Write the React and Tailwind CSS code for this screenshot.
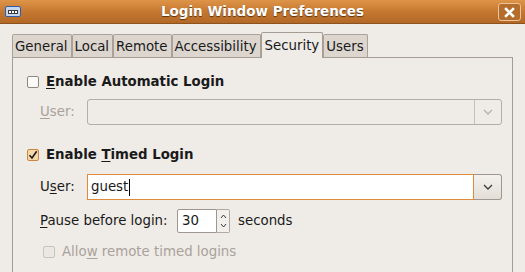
import React from 'react'

const font = { fontFamily: '"DejaVu Sans", "Liberation Sans", sans-serif' }

const Check = ({ checked, disabled }) => (
  <span
    className={`flex h-[12px] w-[12px] shrink-0 items-center justify-center rounded-[2px] border ${
      checked
        ? 'border-[#c9873f] bg-[#f6d7a8]'
        : disabled
        ? 'border-[#c9c3bc] bg-[#ebe7e2]'
        : 'border-[#8f8881] bg-[#fbfaf9]'
    }`}
  >
    {checked && (
      <svg width="10" height="10" viewBox="0 0 10 10">
        <path d="M1.5 5.2 L4 8 L8.7 1.3" fill="none" stroke="#1a1a1a" strokeWidth="1.6" />
      </svg>
    )}
  </span>
)

const Chevron = ({ color }) => (
  <svg width="10" height="6" viewBox="0 0 10 6">
    <path d="M1 1 L5 5 L9 1" fill="none" stroke={color} strokeWidth="1.3" />
  </svg>
)

const Tab = ({ label, active }) => (
  <div
    className={
      active
        ? 'relative z-10 -mb-px flex h-[26px] items-start whitespace-nowrap rounded-t-[2px] border-x border-t border-[#a59d95] bg-[#efebe7] pl-[3px] pr-[3px] pt-[3px]'
        : 'flex h-[23px] items-start whitespace-nowrap rounded-t-[2px] border-x border-t border-[#aaa29a] bg-[#dcd6cf] pl-[2px] pr-[3px] pt-[2px]'
    }
  >
    {label}
  </div>
)

export default function App() {
  const tabs = ['General', 'Local', 'Remote', 'Accessibility', 'Security', 'Users']
  return (
    <div className="h-[272px] w-[525px] overflow-hidden bg-[#efebe7] text-[13.33px] text-[#1a1a1a]" style={font}>
      {/* title bar */}
      <div className="relative flex h-[24px] items-center justify-center border-b border-[#8e521d] bg-linear-to-b from-[#de9548] via-[#c67830] to-[#b26827]">
        <div className="absolute left-[5px] top-[6px] flex h-[11px] w-[16px] items-center justify-center rounded-[2px] border border-[#2f5ea8] bg-[#c5d6ee]">
          <div className="flex h-[4px] w-[10px] items-center justify-center gap-[1px] bg-[#3a3a3a]">
            <span className="h-[2px] w-[2px] bg-white" />
            <span className="h-[2px] w-[2px] bg-white" />
            <span className="h-[2px] w-[2px] bg-white" />
          </div>
        </div>
        <span className="text-[13.5px] font-bold text-white [text-shadow:0_1px_1px_#5a3410]">Login Window Preferences</span>
        <div className="absolute right-[4px] top-[3px] flex h-[18px] w-[23px] items-center justify-center rounded-[3px] border border-[#eac49a] bg-[#b56d2c]">
          <svg width="11" height="11" viewBox="0 0 11 11">
            <path d="M2 2 L9 9 M9 2 L2 9" stroke="white" strokeWidth="2.6" strokeLinecap="square" />
          </svg>
        </div>
      </div>

      <div className="px-[12px] pt-[8px]">
        {/* tabs */}
        <div className="flex h-[25px] items-end">
          {tabs.map(t => (
            <Tab key={t} label={t} active={t === 'Security'} />
          ))}
        </div>

        {/* panel */}
        <div className="h-[240px] border border-[#a59d95] pl-[14px] pr-[10px] pt-[14px]">
          <div className="flex h-[20px] items-center gap-[7px]">
            <Check />
            <span className="font-bold">
              <span className="underline underline-offset-2">E</span>nable Automatic Login
            </span>
          </div>

          <div className="mt-[7px] flex h-[26px] items-center pl-[13px]">
            <span className="w-[47px] shrink-0 text-[#a9a29b]">
              <span className="underline underline-offset-2">U</span>ser:
            </span>
            <div className="flex h-[26px] flex-1 rounded-[3px] border border-[#b6aea6] bg-[#efebe7]">
              <div className="flex-1" />
              <div className="flex w-[27px] items-center justify-center border-l border-[#c6bfb8]">
                <Chevron color="#b9b1a9" />
              </div>
            </div>
          </div>

          <div className="mt-[20px] flex h-[20px] items-center gap-[7px]">
            <Check checked />
            <span className="font-bold">
              Enable <span className="underline underline-offset-2">T</span>imed Login
            </span>
          </div>

          <div className="mt-[9px] flex h-[26px] items-center pl-[13px]">
            <span className="w-[47px] shrink-0">
              U<span className="underline underline-offset-2">s</span>er:
            </span>
            <div className="flex h-[26px] flex-1">
              <div className="flex flex-1 items-center border border-[#dd8a3a] bg-white pl-[3px]">
                guest<span className="ml-px h-[17px] w-px bg-black" />
              </div>
              <div className="flex w-[28px] items-center justify-center rounded-r-[3px] border border-l-0 border-[#9f978f] bg-linear-to-b from-[#f4f1ee] to-[#e4ded8]">
                <Chevron color="#3a3a3a" />
              </div>
            </div>
          </div>

          <div className="mt-[9px] flex h-[24px] items-center pl-[13px]">
            <span className="w-[137px] shrink-0 whitespace-nowrap">
              <span className="underline underline-offset-2">P</span>ause before login:
            </span>
            <div className="flex h-[24px] w-[53px] shrink-0">
              <div className="flex flex-1 items-center rounded-l-[2px] border border-[#9f978f] bg-white pl-[4px]">30</div>
              <div className="flex w-[13px] flex-col items-center justify-center rounded-r-[2px] border border-l-0 border-[#b1a9a1] bg-[#f2efec]">
                <svg width="7" height="18" viewBox="0 0 7 18">
                  <path d="M1 6 L3.5 3 L6 6" fill="none" stroke="#3a3a3a" strokeWidth="1" />
                  <path d="M1 12 L3.5 15 L6 12" fill="none" stroke="#3a3a3a" strokeWidth="1" />
                </svg>
              </div>
            </div>
            <span className="ml-[8px]">seconds</span>
          </div>

          <div className="mt-[9px] flex h-[20px] items-center gap-[7px] pl-[16px]">
            <Check disabled />
            <span className="text-[#a9a29b]">
              Allo<span className="underline underline-offset-2">w</span> remote timed logins
            </span>
          </div>
        </div>
      </div>
    </div>
  )
}
